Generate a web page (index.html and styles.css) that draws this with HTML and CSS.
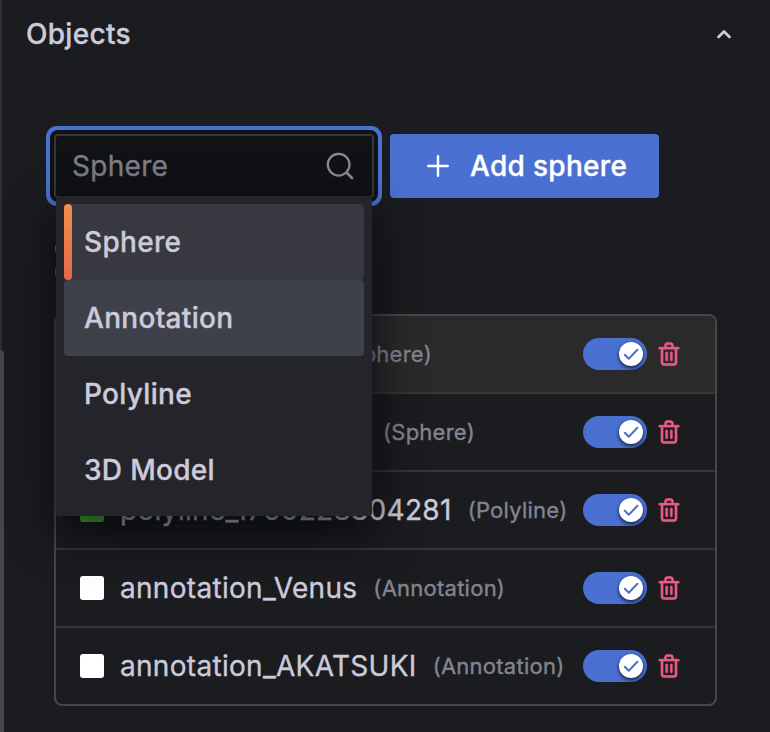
FILE: index.html
```html
<!DOCTYPE html>
<html lang="en">
<head>
<meta charset="utf-8">
<title>Objects</title>
<link rel="stylesheet" href="styles.css">
</head>
<body>
<svg width="0" height="0" class="defs">
  <symbol id="trash" viewBox="0 0 24 24"><path d="M10,18a1,1,0,0,0,1-1V11a1,1,0,0,0-2,0v6A1,1,0,0,0,10,18ZM20,6H16V5a3,3,0,0,0-3-3H11A3,3,0,0,0,8,5V6H4A1,1,0,0,0,4,8H5V19a3,3,0,0,0,3,3h8a3,3,0,0,0,3-3V8h1a1,1,0,0,0,0-2ZM10,5a1,1,0,0,1,1-1h2a1,1,0,0,1,1,1V6H10Zm7,14a1,1,0,0,1-1,1H8a1,1,0,0,1-1-1V8H17Zm-3-1a1,1,0,0,0,1-1V11a1,1,0,0,0-2,0v6A1,1,0,0,0,14,18Z"/></symbol>
  <symbol id="check" viewBox="0 0 24 24"><path d="M5.8 12.8l4 4 8.6-9" fill="none" stroke="currentColor" stroke-width="2" stroke-linecap="round" stroke-linejoin="round"/></symbol>
</svg>
<main class="pane">
  <div class="scrollbar"></div>
  <header class="head">
    <h2>Objects</h2>
    <svg class="chevron" viewBox="0 0 20 20"><path d="M4.5 13L10 7.5l5.500 5.500"/></svg>
  </header>
  <div class="controls">
    <div class="select">
      <span>Sphere</span>
      <svg class="search" viewBox="0 0 24 24"><path d="M21.710,20.290,18,16.610A9,9,0,1,0,16.610,18l3.680,3.680a1,1,0,0,0,1.420,0A1,1,0,0,0,21.710,20.290ZM11,18.300a7.300,7.300,0,1,1,7.300-7.300A7.300,7.300,0,0,1,11,18.300Z"/></svg>
      <ul class="menu">
        <li class="selected">Sphere</li>
        <li class="focused">Annotation</li>
        <li>Polyline</li>
        <li>3D Model</li>
      </ul>
    </div>
    <button class="add"><svg class="plus" viewBox="0 0 24 24"><path d="M12 2.200v19.600M2.200 12h19.600"/></svg>Add sphere</button>
  </div>
  <div class="hint">c<br>C</div>
  <div class="list">
    <div class="row active"><i class="swatch"></i><span class="name w1"></span><span class="type">(Sphere)</span><span class="toggle"><b><svg><use href="#check"/></svg></b></span><svg class="trash"><use href="#trash"/></svg></div>
    <div class="row"><i class="swatch"></i><span class="name w2"></span><span class="type">(Sphere)</span><span class="toggle"><b><svg><use href="#check"/></svg></b></span><svg class="trash"><use href="#trash"/></svg></div>
    <div class="row"><i class="swatch green"></i><span class="name">polyline_1760228304281</span><span class="type">(Polyline)</span><span class="toggle"><b><svg><use href="#check"/></svg></b></span><svg class="trash"><use href="#trash"/></svg></div>
    <div class="row"><i class="swatch"></i><span class="name">annotation_Venus</span><span class="type">(Annotation)</span><span class="toggle"><b><svg><use href="#check"/></svg></b></span><svg class="trash"><use href="#trash"/></svg></div>
    <div class="row"><i class="swatch"></i><span class="name">annotation_AKATSUKI</span><span class="type">(Annotation)</span><span class="toggle"><b><svg><use href="#check"/></svg></b></span><svg class="trash"><use href="#trash"/></svg></div>
  </div>
</main>
</body>
</html>
```
FILE: styles.css
```css
* { box-sizing: border-box; }
body {
  margin: 0;
  background: #1b1c1f;
  color: #cccadb;
  font: 400 28px/44px Inter, sans-serif;
  letter-spacing: 0.3px;
  -webkit-text-stroke: 0.35px currentColor;
}
.defs { position: absolute; }
.pane {
  position: relative;
  height: 732px;
  border-left: 2px solid #2d2e31;
}
.scrollbar {
  position: absolute;
  left: -2px;
  top: 350px;
  bottom: 0;
  width: 4px;
  border-radius: 0 4px 0 0;
  background: #46474b;
}
.head {
  display: flex;
  align-items: center;
  justify-content: space-between;
  height: 68px;
  padding: 0 36px 0 24px;
}
.head h2 { margin: 0; font-size: 28px; font-weight: 500; }
.chevron { width: 20px; height: 20px; }
.chevron path { fill: none; stroke: #cccadb; stroke-width: 2.8; stroke-linecap: round; stroke-linejoin: round; }
.controls { display: flex; gap: 16px; padding: 66px 0 0 52px; }
.select {
  position: relative;
  display: flex;
  align-items: center;
  justify-content: space-between;
  width: 320px;
  height: 64px;
  padding: 0 16px;
  border: 2px solid #36363b;
  border-radius: 4px;
  background: #111216;
  box-shadow: 0 0 0 4px #111216, 0 0 0 8px #4a70d2;
  color: #7e7e88;
}
.search { width: 32px; height: 32px; fill: #8b8b95; }
.menu {
  position: absolute;
  z-index: 2;
  left: 0;
  top: 60px;
  width: 316px;
  margin: 0;
  padding: 8px;
  list-style: none;
  background: #24252a;
  border-radius: 4px;
  box-shadow: 0 16px 48px rgba(1, 4, 9, .8);
  color: #cccadb;
  font-weight: 500;
}
.menu li { position: relative; height: 76px; padding: 16px 20px; border-radius: 4px; -webkit-text-stroke-color: #cccadb; }
.menu .selected { background: #383840; }
.menu .selected::before {
  content: "";
  position: absolute;
  left: 0;
  top: 0;
  width: 8px;
  height: 76px;
  border-radius: 4px;
  background: linear-gradient(#f08f48, #e6684b);
}
.menu .focused { background: #3e4149; }
.add {
  display: flex;
  align-items: center;
  width: 269px;
  height: 64px;
  padding: 0 0 0 36px;
  border: 0;
  border-radius: 4px;
  background: #4a70d2;
  color: #fff;
  font: inherit;
  font-weight: 500;
  letter-spacing: inherit;
}
.plus { width: 24px; height: 24px; margin-right: 20px; }
.plus path { fill: none; stroke: #fff; stroke-width: 2.4; stroke-linecap: round; }
.hint { height: 116px; padding: 36px 0 0 52px; font-size: 24px; line-height: 26px; color: #858590; }
.list {
  width: 663px;
  margin-left: 52px;
  border: 2px solid #464747;
  border-radius: 8px;
  overflow: hidden;
}
.row {
  display: flex;
  align-items: center;
  height: 78px;
  padding: 0 32px 0 24px;
  border-bottom: 2px solid #353636;
}
.row:last-child { height: 76px; border-bottom: 0; }
.active { background: #2a2a2a; }
.swatch { width: 24px; height: 24px; margin-right: 16px; border-radius: 3px; background: #fff; }
.green { background: #56c43c; }
.w1 { width: 204px; }
.w2 { width: 247px; }
.type { margin-left: 16px; font-size: 22px; letter-spacing: 0.25px; color: #858590; }
.toggle {
  display: flex;
  justify-content: flex-end;
  width: 64px;
  height: 32px;
  margin-left: auto;
  padding: 4px;
  border-radius: 16px;
  background: #4a70d2;
}
.toggle b { width: 24px; height: 24px; border-radius: 50%; background: #fff; color: #4a70d2; box-shadow: 0 2px 4px rgba(1, 4, 9, .75); }
.toggle svg { display: block; width: 24px; height: 24px; }
.trash { width: 28px; height: 28px; margin-left: 8px; fill: #ea5a83; stroke: #ea5a83; stroke-width: .25; }
```
